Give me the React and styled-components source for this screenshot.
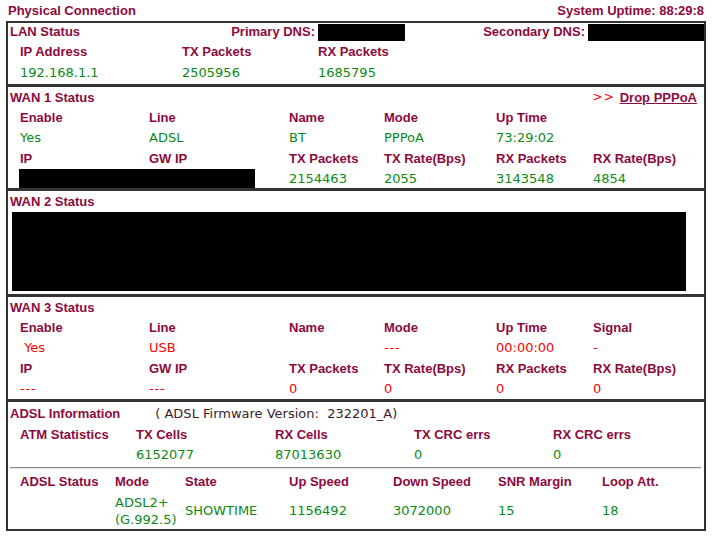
import React from 'react'
import styled, { createGlobalStyle } from 'styled-components'

const MAROON = '#8c0a3c'
const GREEN = '#0b8a16'
const RED = '#ff0000'
const LINE = '#333'

const GlobalStyle = createGlobalStyle`
  body {
    margin: 0;
    background: #fff;
    font-family: "Liberation Sans", Arial, sans-serif;
  }
`

const Page = styled.div`
  width: 700px;
  margin-left: 6px;
`

const TopBar = styled.div`
  box-sizing: border-box;
  display: flex;
  justify-content: space-between;
  height: 21px;
  padding: 2px 2px 0;
  line-height: 18px;
  font: bold 13px/18px "Liberation Sans", Arial, sans-serif;
  color: ${MAROON};
`

const Frame = styled.div`
  box-sizing: border-box;
  height: 510px;
  border: 2px solid ${LINE};
`

const Section = styled.div`
  box-sizing: border-box;
  height: ${p => p.h}px;
  padding-left: 2px;
  border-bottom: ${p => (p.last ? 'none' : `3px solid ${LINE}`)};
  overflow: hidden;
`

const TitleRow = styled.div`
  display: flex;
  align-items: center;
  justify-content: space-between;
  height: ${p => p.h}px;
  padding-right: 7px;
`

const Title = styled.span`
  font: bold 13px "Liberation Sans", Arial, sans-serif;
  color: ${MAROON};
  white-space: nowrap;
  margin-top: ${p => p.mt || 0}px;
`

const DnsRow = styled.div`
  display: grid;
  grid-template-columns: 210px 95px 3px 87px 180px 3px 116px;
  align-items: start;
  height: 16px;
  line-height: 16px;
`

const DnsLabel = styled(Title)`
  grid-column: ${p => p.col};
  text-align: right;
  margin-top: 1px;
`

const Mask = styled.div`
  background: #000;
  grid-column: ${p => p.col || 'auto'};
  width: ${p => p.w}px;
  height: ${p => p.hgt}px;
  margin-top: ${p => p.mt || 0}px;
  margin-left: ${p => p.ml || 0}px;
`

const Grid = styled.div`
  display: grid;
  grid-template-columns: ${p => p.cols};
  grid-template-rows: ${p => p.rows};
  align-items: center;
  margin-left: 10px;
  margin-top: ${p => p.mt || 0}px;
`

const Label = styled.span`
  font: bold 13px "Liberation Sans", Arial, sans-serif;
  color: ${MAROON};
  white-space: nowrap;
`

const Value = styled.span`
  font: 13px "DejaVu Sans", Verdana, sans-serif;
  color: ${p => p.color || GREEN};
  white-space: nowrap;
  line-height: 17px;
  letter-spacing: ${p => (p.children === '---' ? '0.8px' : 'normal')};
`

const DropLink = styled.span`
  display: flex;
  align-items: center;
  gap: 5px;
`

const Arrows = styled.span`
  font: 12px "DejaVu Sans", Verdana, sans-serif;
  color: ${RED};
  letter-spacing: 1px;
`

const LinkText = styled.a`
  font: bold 13px "Liberation Sans", Arial, sans-serif;
  color: ${MAROON};
  text-decoration: underline;
`

const Firmware = styled.span`
  font: 13px "DejaVu Sans", Verdana, sans-serif;
  color: #3a1b2c;
  white-space: pre;
  margin-left: 35px;
`

const Divider = styled.div`
  width: 691px;
  height: 1px;
  background: #8a8a8a;
  border-bottom: 1px solid #e4e4e4;
  margin: 2px 0 2px 0;
`

const WAN_COLS = '129px 140px 95px 112px 97px 1fr'

const WanTable = ({ color, row1, row2, ipMask }) => (
  <Grid cols={WAN_COLS} rows="20.5px 20.5px 20.5px 20.5px">
    {['Enable', 'Line', 'Name', 'Mode', 'Up Time', row1.length > 5 ? 'Signal' : ''].map((t, i) => (
      <Label key={'h1' + i}>{t}</Label>
    ))}
    {row1.concat(row1.length > 5 ? [] : ['']).map((t, i) => (
      <Value key={'v1' + i} color={color}>{t}</Value>
    ))}
    {['IP', 'GW IP', 'TX Packets', 'TX Rate(Bps)', 'RX Packets', 'RX Rate(Bps)'].map((t, i) => (
      <Label key={'h2' + i}>{t}</Label>
    ))}
    {ipMask ? (
      <Mask col="1 / span 2" w={236} hgt={19} ml={-1} />
    ) : (
      row2.slice(0, 2).map((t, i) => <Value key={'ip' + i} color={color}>{t}</Value>)
    )}
    {row2.slice(2).map((t, i) => (
      <Value key={'v2' + i} color={color}>{t}</Value>
    ))}
  </Grid>
)

export default function App() {
  return (
    <>
      <GlobalStyle />
      <Page>
        <TopBar>
          <span>Physical Connection</span>
          <span>System Uptime: 88:29:8</span>
        </TopBar>
        <Frame>
          <Section h={64}>
            <DnsRow>
              <Title mt={1}>LAN Status</Title>
              <DnsLabel col={2}>Primary DNS:</DnsLabel>
              <Mask col={4} w={87} hgt={17} mt={1} />
              <DnsLabel col={5}>Secondary DNS:</DnsLabel>
              <Mask col={7} w={116} hgt={17} mt={1} />
            </DnsRow>
            <Grid cols="162px 136px 1fr" rows="21px 21px" mt={1.5}>
              <Label>IP Address</Label>
              <Label>TX Packets</Label>
              <Label>RX Packets</Label>
              <Value>192.168.1.1</Value>
              <Value>2505956</Value>
              <Value>1685795</Value>
            </Grid>
          </Section>

          <Section h={104}>
            <TitleRow h={20}>
              <Title>WAN 1 Status</Title>
              <DropLink>
                <Arrows>&gt;&gt;</Arrows>
                <LinkText>Drop PPPoA</LinkText>
              </DropLink>
            </TitleRow>
            <WanTable
              row1={['Yes', 'ADSL', 'BT', 'PPPoA', '73:29:02']}
              row2={['', '', '2154463', '2055', '3143548', '4854']}
              ipMask
            />
          </Section>

          <Section h={106}>
            <TitleRow h={21}>
              <Title>WAN 2 Status</Title>
            </TitleRow>
            <Mask w={674} hgt={79} ml={2} />
          </Section>

          <Section h={105}>
            <TitleRow h={20}>
              <Title>WAN 3 Status</Title>
            </TitleRow>
            <WanTable
              color={RED}
              row1={['\u00a0Yes', 'USB', '', '---', '00:00:00', '-']}
              row2={['---', '---', '0', '0', '0', '0']}
            />
          </Section>

          <Section h={127} last>
            <TitleRow h={22}>
              <Title>
                ADSL Information
                <Firmware>( ADSL Firmware Version:  232201_A)</Firmware>
              </Title>
            </TitleRow>
            <Grid cols="116px 139px 139px 139px 1fr" rows="20px 21px">
              <Label>ATM Statistics</Label>
              <Label>TX Cells</Label>
              <Label>RX Cells</Label>
              <Label>TX CRC errs</Label>
              <Label>RX CRC errs</Label>
              <span />
              <Value>6152077</Value>
              <Value>87013630</Value>
              <Value>0</Value>
              <Value>0</Value>
            </Grid>
            <Divider />
            <Grid cols="95px 70px 104px 104px 105px 104px 1fr" rows="21px 37px" mt={1}>
              <Label>ADSL Status</Label>
              <Label>Mode</Label>
              <Label>State</Label>
              <Label>Up Speed</Label>
              <Label>Down Speed</Label>
              <Label>SNR Margin</Label>
              <Label>Loop Att.</Label>
              <span />
              <Value>
                ADSL2+
                <br />
                (G.992.5)
              </Value>
              <Value>SHOWTIME</Value>
              <Value>1156492</Value>
              <Value>3072000</Value>
              <Value>15</Value>
              <Value>18</Value>
            </Grid>
          </Section>
        </Frame>
      </Page>
    </>
  )
}
